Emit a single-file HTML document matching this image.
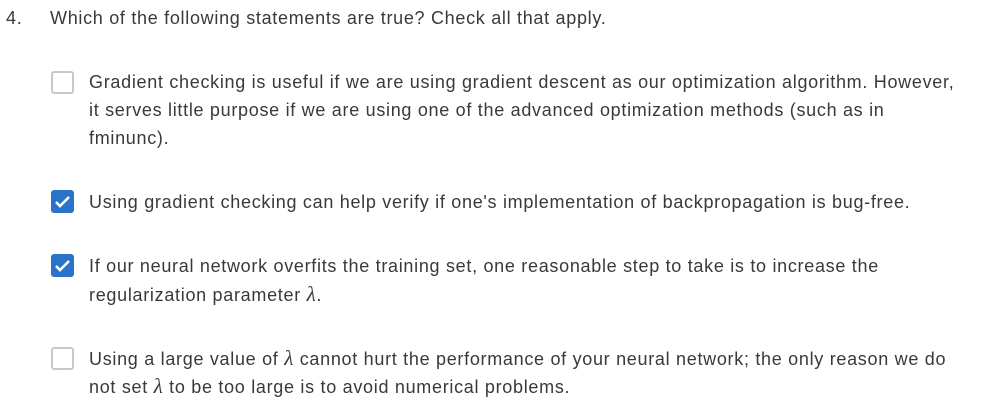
<!DOCTYPE html>
<html><head><style>
body{margin:0;background:#fff;width:986px;height:418px;position:relative;font-family:"Liberation Sans",sans-serif;color:#373a3c;font-size:18px;letter-spacing:0.7px;overflow:hidden}
.l{position:absolute;white-space:nowrap;line-height:28px}
.cb{position:absolute;left:51px;width:19px;height:19px;border:2px solid #c8c8c8;border-radius:3px;background:#fff}
.ck{position:absolute;left:51px;width:23px;height:23px;border-radius:3px;background:#2a73cc}
.ck svg{position:absolute;left:3px;top:4px}
i{font-family:"Liberation Serif",serif;font-size:21px}
</style></head><body>
<div class="l" style="left:6px;top:4px">4.</div>
<div class="l" style="left:50px;top:4px">Which of the following statements are true? Check all that apply.</div>

<div class="cb" style="top:71px"></div>
<div class="l" style="left:89px;top:68px">Gradient checking is useful if we are using gradient descent as our optimization algorithm. However,</div>
<div class="l" style="left:89px;top:96px">it serves little purpose if we are using one of the advanced optimization methods (such as in</div>
<div class="l" style="left:89px;top:124px">fminunc).</div>

<div class="ck" style="top:190px"><svg width="17" height="15" viewBox="0 0 17 15"><path d="M2 8l4 4 9-9" stroke="#fff" stroke-width="2.6" fill="none"/></svg></div>
<div class="l" style="left:89px;top:188px">Using gradient checking can help verify if one's implementation of backpropagation is bug-free.</div>

<div class="ck" style="top:254px"><svg width="17" height="15" viewBox="0 0 17 15"><path d="M2 8l4 4 9-9" stroke="#fff" stroke-width="2.6" fill="none"/></svg></div>
<div class="l" style="left:89px;top:252px">If our neural network overfits the training set, one reasonable step to take is to increase the</div>
<div class="l" style="left:89px;top:280px">regularization parameter <i>λ</i>.</div>

<div class="cb" style="top:347px"></div>
<div class="l" style="left:89px;top:344px">Using a large value of <i>λ</i> cannot hurt the performance of your neural network; the only reason we do</div>
<div class="l" style="left:89px;top:372px">not set <i>λ</i> to be too large is to avoid numerical problems.</div>
</body></html>
